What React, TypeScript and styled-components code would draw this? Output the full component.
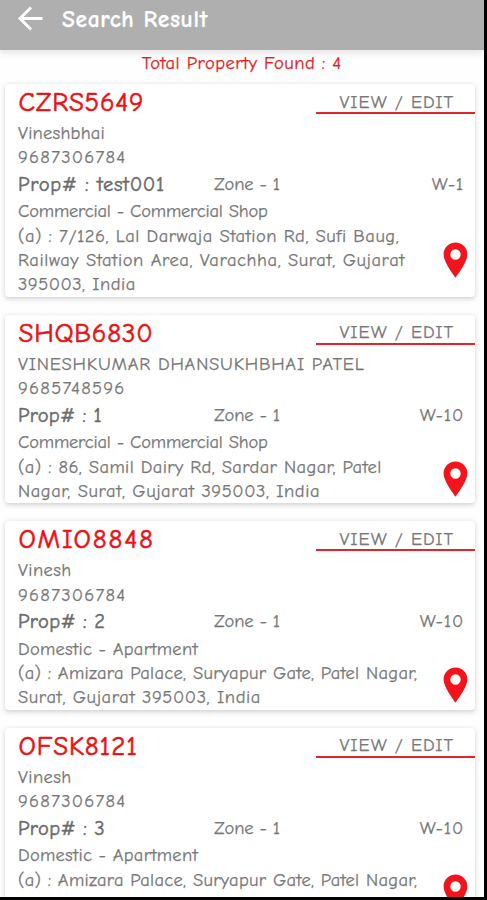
import React from "react";
import styled, { createGlobalStyle } from "styled-components";

const GlobalStyle = createGlobalStyle`
  * { box-sizing: border-box; }
  body { margin: 0; background: #000; overflow: hidden; }
`;

const Frame = styled.div`
  height: 900px;
  padding: 0 3.5px 3.5px 0;
  background: #000;
  font-family: "Comic Sans MS", "Comic Neue", Inter, sans-serif;
  font-size: 18.5px;
  color: #777;
  -webkit-text-stroke: 0.25px currentColor;
`;

const Screen = styled.main`
  height: 100%;
  overflow: hidden;
  background: #fefefe;
`;

const Header = styled.header`
  display: flex;
  align-items: center;
  height: 49.5px;
  padding: 0 0 11px 17px;
  background: #afafaf;
  color: #fff;
  box-shadow: 0 2px 8px rgba(0, 0, 0, 0.13);
`;

const BackIcon = styled.svg`
  width: 26px;
  height: 26px;
  margin-right: 19px;
`;

const Text = styled.span<{ $track?: number }>`
  letter-spacing: ${(p) => p.$track ?? 0}px;
  white-space: pre;
`;

const Heading = styled(Text).attrs({ as: "h1" })`
  margin: 2px 0 0;
  font-size: 23.5px;
  line-height: 26px;
  font-weight: 700;
`;

const Total = styled.div`
  height: 34.5px;
  line-height: 26px;
  text-align: center;
  color: #e51c24;
`;

const List = styled.div`
  display: flex;
  flex-direction: column;
  gap: 18.2px;
  padding: 0 8.5px 0 5px;
`;

const Card = styled.article`
  border-radius: 4px;
  background: #fff;
  box-shadow: 0 1.5px 5px rgba(0, 0, 0, 0.18);
`;

const TitleRow = styled.div`
  display: flex;
  justify-content: space-between;
  height: 36.75px;
  padding-left: 13.5px;
`;

const Code = styled(Text)`
  line-height: 37px;
  font-size: 27px;
  color: #ec1015;
  -webkit-text-stroke-width: 0.6px;
`;

const EditButton = styled.button`
  width: 159.5px;
  height: 30px;
  padding: 8px 0 0 3px;
  border: 0;
  border-bottom: 2.5px solid #e3242b;
  background: none;
  font: inherit;
  line-height: 19px;
  color: inherit;
`;

const Line = styled.div`
  height: 24.5px;
  padding-left: 13px;
  line-height: 24.5px;
`;

const PropRow = styled.div`
  display: grid;
  grid-template-columns: 196px 1fr auto;
  height: 29.5px;
  padding: 0 11px 0 13px;
  line-height: 29.5px;
`;

const PropNumber = styled(Text)`
  font-size: 20.5px;
  color: #6a6a6a;
  -webkit-text-stroke-width: 0.5px;
`;

const AddressRow = styled.div`
  display: flex;
  align-items: center;
  justify-content: space-between;
  min-height: 48.6px;
  padding: 0 7px 0 13px;
`;

const Address = styled.div`
  display: flex;
  flex-direction: column;
  align-self: flex-start;
  line-height: 24.3px;
`;

const Pin = styled.svg`
  width: 25px;
  height: 36px;
  flex: none;
`;

type Tracked = [string, number];
interface Property {
  code: Tracked;
  name: Tracked;
  phone: string;
  prop: Tracked;
  ward: string;
  type: Tracked;
  address: Tracked[];
}

const properties: Property[] = [
  {
    code: ["CZRS5649", 0.7],
    name: ["Vineshbhai", 0.22],
    phone: "9687306784",
    prop: ["Prop# : test001", 0.68],
    ward: "W-1",
    type: ["Commercial - Commercial Shop", -0.18],
    address: [
      ["(a) : 7/126, Lal Darwaja Station Rd, Sufi Baug,", 0.51],
      ["Railway Station Area, Varachha, Surat, Gujarat", 0.57],
      ["395003, India", 0.5],
    ],
  },
  {
    code: ["SHQB6830", 0.75],
    name: ["VINESHKUMAR DHANSUKHBHAI PATEL", 0.78],
    phone: "9685748596",
    prop: ["Prop# : 1", 0.25],
    ward: "W-10",
    type: ["Commercial - Commercial Shop", -0.18],
    address: [
      ["(a) : 86, Samil Dairy Rd, Sardar Nagar, Patel", 0.4],
      ["Nagar, Surat, Gujarat 395003, India", 0.56],
    ],
  },
  {
    code: ["OMIO8848", 1.8],
    name: ["Vinesh", 0.4],
    phone: "9687306784",
    prop: ["Prop# : 2", 0.35],
    ward: "W-10",
    type: ["Domestic - Apartment", 0.26],
    address: [
      ["(a) : Amizara Palace, Suryapur Gate, Patel Nagar,", 0.3],
      ["Surat, Gujarat 395003, India", 0.58],
    ],
  },
  {
    code: ["OFSK8121", 0.85],
    name: ["Vinesh", 0.4],
    phone: "9687306784",
    prop: ["Prop# : 3", 0.35],
    ward: "W-10",
    type: ["Domestic - Apartment", 0.26],
    address: [["(a) : Amizara Palace, Suryapur Gate, Patel Nagar,", 0.3]],
  },
];

function PropertyCard({ item }: { item: Property }) {
  return (
    <Card>
      <TitleRow>
        <Code $track={item.code[1]}>{item.code[0]}</Code>
        <EditButton>
          <Text $track={0.96}>VIEW / EDIT</Text>
        </EditButton>
      </TitleRow>
      <Line>
        <Text $track={item.name[1]}>{item.name[0]}</Text>
      </Line>
      <Line>
        <Text $track={1.25}>{item.phone}</Text>
      </Line>
      <PropRow>
        <PropNumber $track={item.prop[1]}>{item.prop[0]}</PropNumber>
        <Text $track={-0.15}>Zone - 1</Text>
        <Text $track={0.8}>{item.ward}</Text>
      </PropRow>
      <Line>
        <Text $track={item.type[1]}>{item.type[0]}</Text>
      </Line>
      <AddressRow>
        <Address>
          {item.address.map(([text, track]) => (
            <Text key={text} $track={track}>
              {text}
            </Text>
          ))}
        </Address>
        <Pin viewBox="0 0 25 36">
          <path
            fill="#f2141c"
            fillRule="evenodd"
            d="M12.5.5C5.8.5.6 5.7.6 12.2.6 20.7 12.5 35.5 12.5 35.5S24.4 20.7 24.4 12.2C24.4 5.7 19.2.5 12.5.5ZM12.5 7.3a5.2 5.2 0 1 1 0 10.4 5.2 5.2 0 0 1 0-10.4Z"
          />
        </Pin>
      </AddressRow>
    </Card>
  );
}

export default function App() {
  return (
    <Frame>
      <GlobalStyle />
      <Screen>
        <Header>
          <BackIcon viewBox="0 0 26 26" fill="none" stroke="#fff" strokeWidth="2.9">
            <path d="M25.5 12.500H3M14 1.500 3 12.500 14 23.500" />
          </BackIcon>
          <Heading $track={0.65}>Search Result</Heading>
        </Header>
        <Total>
          <Text $track={0.45}>Total Property Found : 4</Text>
        </Total>
        <List>
          {properties.map((item) => (
            <PropertyCard key={item.code[0]} item={item} />
          ))}
        </List>
      </Screen>
    </Frame>
  );
}
